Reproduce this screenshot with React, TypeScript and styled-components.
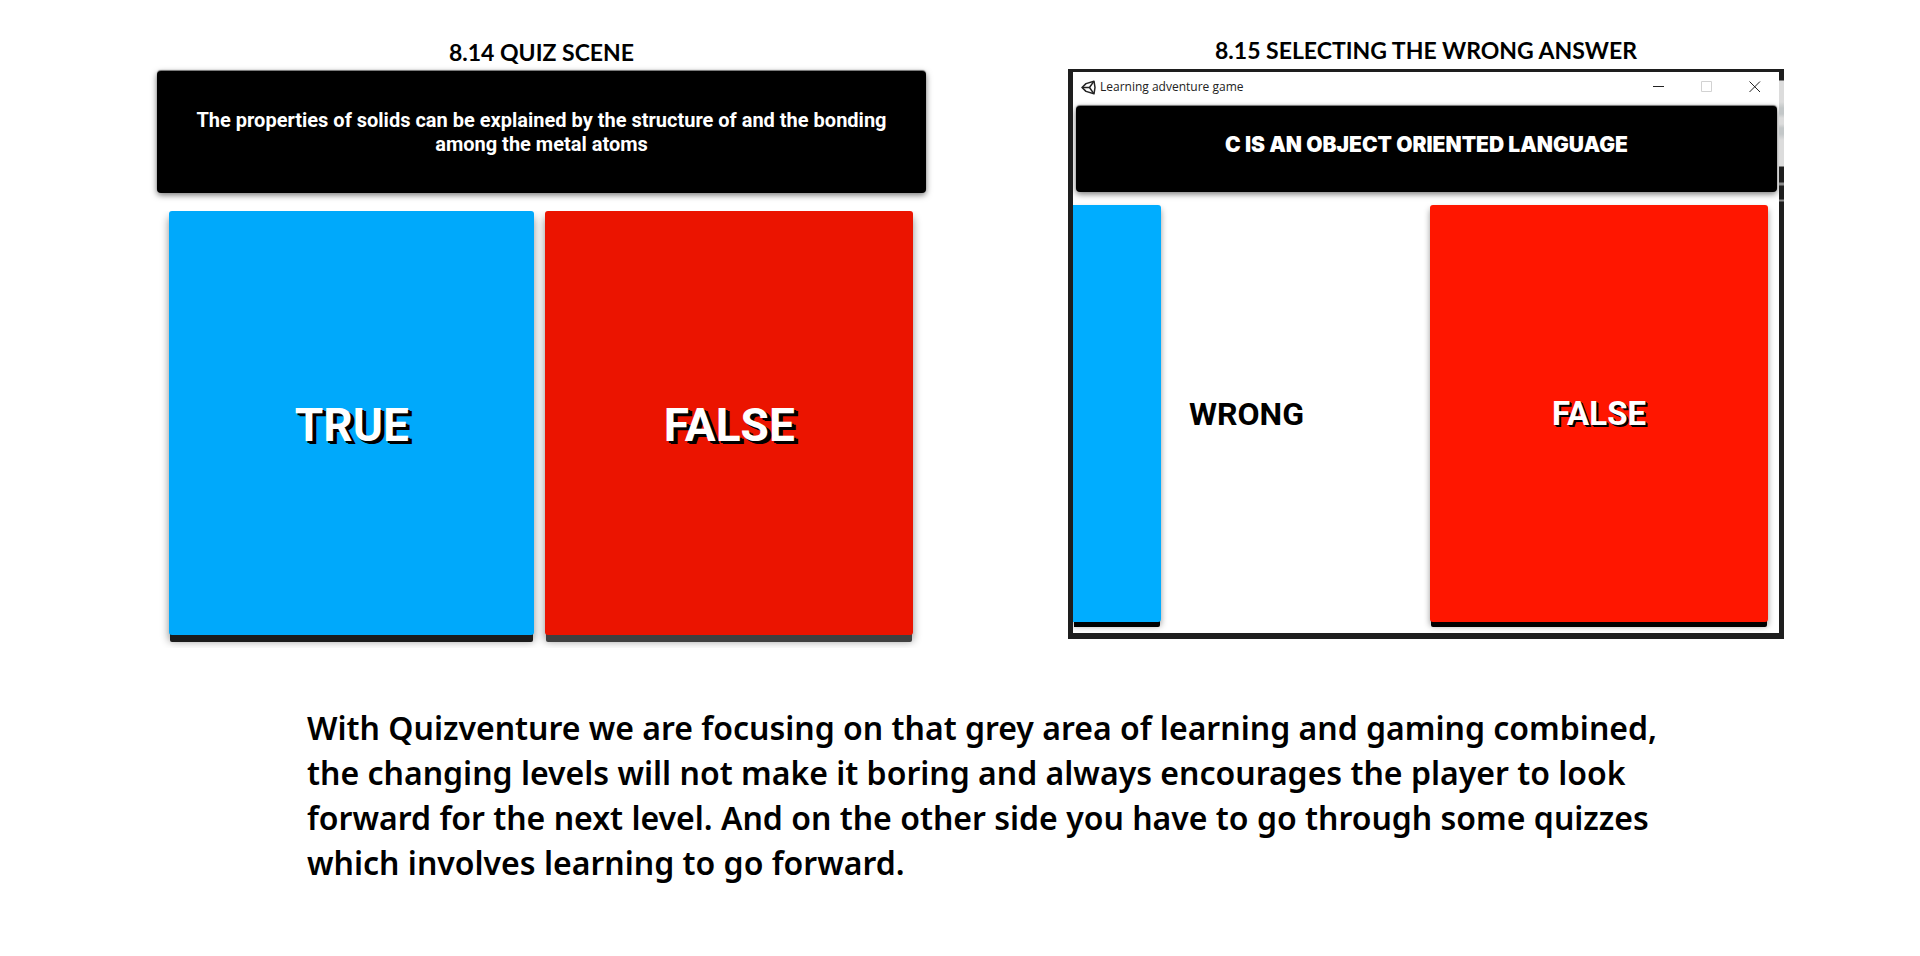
import React from "react";
import styled, { createGlobalStyle } from "styled-components";

const GlobalStyle = createGlobalStyle`
  *, *::before, *::after { box-sizing: border-box; }
  body {
    margin: 0;
    background: #fff;
    color: #000;
    font-family: "Noto Sans", "Open Sans", sans-serif;
  }
`;

const Page = styled.main`
  padding-bottom: 60px;
`;

const Scenes = styled.div`
  display: grid;
  grid-template-columns: 769fr 716fr;
  column-gap: 142px;
  align-items: start;
  padding: 36px 136px 0 157px;
`;

const Scene = styled.section<{ $drop?: number }>`
  padding-top: ${({ $drop = 0 }) => $drop}px;
  min-width: 0;
`;

const SceneTitle = styled.h2`
  margin: 0 0 5px;
  font-family: Lato, sans-serif;
  font-size: 23px;
  line-height: 28px;
  font-weight: 700;
  text-align: center;
`;

const QuizPanel = styled.div`
  overflow: hidden;
  margin: 0 -6px;
  padding: 0 6px 13px;
`;

const Question = styled.p<{ $compact?: boolean }>`
  display: flex;
  align-items: center;
  justify-content: center;
  margin: ${({ $compact }) => ($compact ? "0 2px 13px 3px" : "0 0 18px")};
  min-height: ${({ $compact }) => ($compact ? 86 : 122)}px;
  padding: ${({ $compact }) => ($compact ? "0 20px 8px" : "0 20px")};
  border-radius: 4px;
  background: #000;
  color: #fff;
  font-family: ${({ $compact }) => ($compact ? "Inter" : "Roboto")}, sans-serif;
  font-weight: ${({ $compact }) => ($compact ? 900 : 700)};
  font-size: ${({ $compact }) => ($compact ? 21 : 20)}px;
  line-height: 24px;
  text-align: center;
  box-shadow: 0 2px 6px rgba(0, 0, 0, 0.55), 0 -1px 1px rgba(0, 0, 0, 0.5);
`;

const Answers = styled.div`
  display: grid;
  grid-template-columns: 365fr 367fr;
  column-gap: 11px;
  padding: 0 13px 0 12px;
`;

const Answer = styled.button<{ $color: string; $base: string }>`
  height: 424px;
  padding: 4px 0 0;
  border: 0;
  border-radius: 3px;
  background: ${({ $color }) => $color};
  color: #fff;
  font-family: Roboto, sans-serif;
  font-weight: 700;
  font-size: 46px;
  line-height: 52px;
  text-shadow: 2px 2px 0 #000, 4px 3px 0 #000;
  box-shadow: 0 8px 0 -1px ${({ $base }) => $base}, 0 6px 9px rgba(0, 0, 0, 0.45);
  cursor: pointer;
`;

const Frame = styled.div`
  display: grid;
  grid-template-columns: minmax(0, 1fr) 5px;
  border: solid #1e1e1e;
  border-width: 3px 0 6px 5px;
`;

const Client = styled.div`
  overflow: hidden;
  padding-bottom: 11px;
`;

const Backdrop = styled.div`
  background: linear-gradient(
    #1e1e1e 0 8px,
    #dcdcdc 9px 30px,
    #c3c7c8 36px 42px,
    #dcdcdc 46px 52px,
    #c3c7c8 56px 62px,
    #dcdcdc 68px 94px,
    #1e1e1e 95px 110px,
    #8a8a8a 111px 113px,
    #1e1e1e 114px 127px,
    #8a8a8a 128px 129px,
    #1e1e1e 130px
  );
`;

const TitleBar = styled.header`
  display: flex;
  align-items: center;
  height: 30px;
  margin-bottom: 4px;
  padding-left: 8px;
`;

const AppName = styled.span`
  flex: 1;
  margin-left: 4px;
  color: #222;
  font-family: "Open Sans", sans-serif;
  font-size: 12px;
  line-height: 16px;
`;

const WindowButton = styled.button<{ $muted?: boolean }>`
  display: grid;
  place-items: center;
  width: 48px;
  height: 30px;
  padding: 0;
  border: 0;
  background: none;
  color: ${({ $muted }) => ($muted ? "#d2d2d2" : "#222")};
`;

const Sliding = styled.div`
  display: grid;
  grid-template-columns: 88fr 269fr 338fr;
  align-items: center;
  padding-right: 11px;
`;

const SlidingAnswer = styled(Answer)<{ $cut?: boolean }>`
  height: 417px;
  padding: 0;
  border-radius: ${({ $cut }) => ($cut ? "0 3px 3px 0" : "3px")};
  font-size: 33px;
  line-height: 38px;
  text-shadow: 1px 1px 0 #000, 2px 2px 0 #000;
  box-shadow: 0 6px 0 -1px ${({ $base }) => $base}, 0 4px 6px rgba(0, 0, 0, 0.4);
`;

const Verdict = styled.p`
  margin: 0;
  padding-left: 28px;
  font-family: Roboto, sans-serif;
  font-weight: 700;
  font-size: 32px;
  line-height: 38px;
`;

const Summary = styled.p`
  max-width: 1687px;
  margin: 57px 0 0;
  padding-left: 307px;
  font-weight: 600;
  font-size: 32px;
  line-height: 45px;
`;

const EngineLogo = () => (
  <svg width="15" height="15" viewBox="0 0 15 15" fill="none" stroke="#222" aria-hidden="true">
    <path d="M1 7.5 5 3.6 13 1.2 14 7.500 13 13.8 5 11.4Z" strokeWidth="1.5" strokeLinejoin="round" />
    <path d="M2 7.5H8.500M8.500 7.500 12.6 1.6M8.500 7.500 12.6 13.4" strokeWidth="1.5" />
  </svg>
);

export default function App() {
  return (
    <>
      <GlobalStyle />
      <Page>
        <Scenes>
          <Scene $drop={2}>
            <SceneTitle>8.14 QUIZ SCENE</SceneTitle>
            <Question>
              The properties of solids can be explained by the structure of and the bonding
              <br />
              among the metal atoms
            </Question>
            <QuizPanel>
              <Answers>
                <Answer $color="#00a9fb" $base="#1b1b1b">TRUE</Answer>
                <Answer $color="#eb1400" $base="#404040">FALSE</Answer>
              </Answers>
            </QuizPanel>
          </Scene>

          <Scene>
            <SceneTitle>8.15 SELECTING THE WRONG ANSWER</SceneTitle>
            <Frame>
              <Client>
                <TitleBar>
                  <EngineLogo />
                  <AppName>Learning adventure game</AppName>
                  <WindowButton aria-label="Minimize">
                    <svg width="12" height="12" stroke="currentColor">
                      <path d="M0 5.5H11" />
                    </svg>
                  </WindowButton>
                  <WindowButton $muted aria-label="Maximize" disabled>
                    <svg width="12" height="12" fill="none" stroke="currentColor">
                      <path d="M.5 .5H10.5V10.5H.5Z" />
                    </svg>
                  </WindowButton>
                  <WindowButton aria-label="Close">
                    <svg width="12" height="12" stroke="currentColor">
                      <path d="M.5 .5 11 11M11 .5 .5 11" />
                    </svg>
                  </WindowButton>
                </TitleBar>
                <Question $compact>C IS AN OBJECT ORIENTED LANGUAGE</Question>
                <Sliding>
                  <SlidingAnswer $color="#00adff" $base="#000" $cut aria-label="True" />
                  <Verdict>WRONG</Verdict>
                  <SlidingAnswer $color="#ff1600" $base="#000">FALSE</SlidingAnswer>
                </Sliding>
              </Client>
              <Backdrop />
            </Frame>
          </Scene>
        </Scenes>

        <Summary>
          With Quizventure we are focusing on that grey area of learning and gaming combined,
          the changing levels will not make it boring and always encourages the player to look
          forward for the next level. And on the other side you have to go through some quizzes
          which involves learning to go forward.
        </Summary>
      </Page>
    </>
  );
}
